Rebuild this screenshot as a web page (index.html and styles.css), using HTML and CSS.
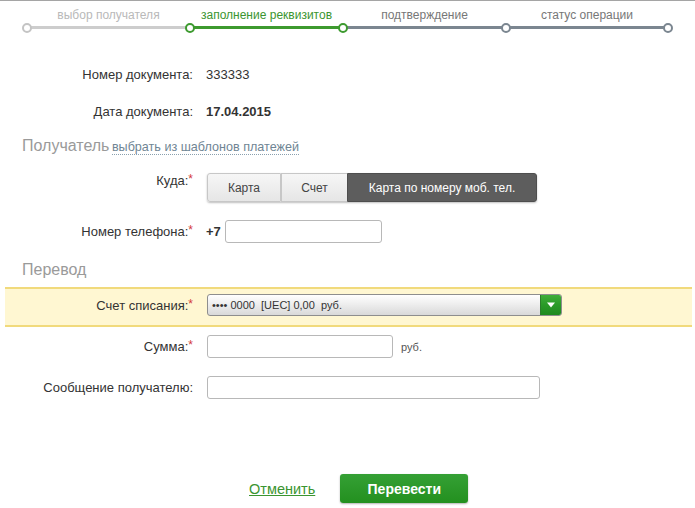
FILE: index.html
```html
<!DOCTYPE html>
<html lang="ru">
<head>
<meta charset="utf-8">
<link rel="stylesheet" href="styles.css">
</head>
<body>
<div class="topbar"></div>
<div class="steps">
  <div class="step done"><div class="step-label">выбор получателя</div><div class="track"></div></div>
  <div class="step active"><div class="step-label">заполнение реквизитов</div><div class="track"></div></div>
  <div class="step next"><div class="step-label">подтверждение</div><div class="track"></div></div>
  <div class="step next last"><div class="step-label">статус операции</div><div class="track"></div></div>
</div>

<div class="form">
  <div class="row info first">
    <div class="label">Номер документа:</div>
    <div class="value">333333</div>
  </div>
  <div class="row info second">
    <div class="label">Дата документа:</div>
    <div class="value bold">17.04.2015</div>
  </div>

  <div class="heading h-recipient">Получатель <a class="tpl-link">выбрать из шаблонов платежей</a></div>

  <div class="row where">
    <div class="label top">Куда:<span class="req">*</span></div>
    <div class="seg">
      <span class="seg-btn seg-card">Карта</span>
      <span class="seg-btn seg-acc">Счет</span>
      <span class="seg-btn seg-on">Карта по номеру моб. тел.</span>
    </div>
  </div>

  <div class="row phone">
    <div class="label">Номер телефона:<span class="req">*</span></div>
    <div class="field"><span class="prefix">+7</span><span class="input in-phone"></span></div>
  </div>

  <div class="heading h-transfer">Перевод</div>

  <div class="band">
    <div class="row">
      <div class="label">Счет списания:<span class="req">*</span></div>
      <div class="select">
        <span class="select-text">•••• 0000&nbsp; [UEC] 0,00&nbsp; руб.</span>
        <span class="select-btn"><svg width="10" height="6" viewBox="0 0 10 6"><path d="M1 0.5 L9 0.5 L5 5.5 Z" fill="#fff"/></svg></span>
      </div>
    </div>
  </div>

  <div class="row sum">
    <div class="label">Сумма:<span class="req">*</span></div>
    <div class="field"><span class="input in-sum"></span><span class="unit">руб.</span></div>
  </div>

  <div class="row msg">
    <div class="label">Сообщение получателю:</div>
    <div class="field"><span class="input in-msg"></span></div>
  </div>

  <div class="actions">
    <a class="cancel">Отменить</a>
    <span class="submit">Перевести</span>
  </div>
</div>
</body>
</html>
```

FILE: styles.css
```css
html, body {
  margin: 0;
  padding: 0;
  background: #fff;
}
body {
  font-family: "Liberation Sans", Arial, sans-serif;
  color: #333;
  width: 695px;
  height: 508px;
  overflow: hidden;
}
.topbar {
  height: 1px;
  background: #a5a5a5;
}
.steps {
  display: grid;
  grid-template-columns: 163px 153px 163px 162px;
  margin-left: 27px;
  padding-top: 7px;
  height: 32px;
}
.step {
  position: relative;
}
.step-label {
  font-size: 12px;
  line-height: 14px;
  height: 14px;
  text-align: center;
  color: #777;
}
.track {
  position: relative;
  margin-top: 4px;
  height: 3px;
}
.track::before {
  content: "";
  position: absolute;
  left: -5px;
  top: -3.5px;
  width: 6px;
  height: 6px;
  border-radius: 50%;
  background: #fff;
  border: 2px solid #7b8690;
  z-index: 2;
}
.step.last .track::after {
  content: "";
  position: absolute;
  right: -5px;
  top: -3.5px;
  width: 6px;
  height: 6px;
  border-radius: 50%;
  background: #fff;
  border: 2px solid #7b8690;
  z-index: 2;
}
.step.done .step-label { color: #b9b9b9; }
.step.done .track { background: #cdcdcd; }
.step.done .track::before { border-color: #c4c4c4; }
.step.active .step-label { color: #3b9530; }
.step.active .track { background: #3d9a2f; }
.step.active .track::before { border-color: #3d9a2f; }
.step.next .track { background: #7b8690; }
.steps .step:nth-child(3) .track::before { border-color: #3d9a2f; }

.form {
  font-size: 13px;
}
.row {
  display: flex;
  align-items: center;
}
.label {
  width: 193px;
  text-align: right;
  flex: none;
  color: #333;
}
.label.top {
  align-self: flex-start;
  padding-top: 0;
}
.req {
  color: #d43a3a;
  font-size: 12px;
  position: relative;
  top: -2px;
}
.value {
  margin-left: 13px;
  color: #333;
}
.value.bold {
  font-weight: bold;
}
.info {
  height: 20px;
}
.info.first { margin-top: 24px; }
.info.second { margin-top: 17px; }

.heading {
  font-size: 16px;
  line-height: 20px;
  height: 20px;
  color: #9a9a9a;
  margin-left: 22px;
}
.h-recipient { margin-top: 15px; }
.h-transfer { margin-top: 17px; }
.tpl-link {
  font-size: 12.6px;
  color: #6f8594;
  border-bottom: 1px dotted #8aa0ae;
  line-height: 14px;
  margin-left: -2px;
}

.where {
  margin-top: 17px;
}
.seg {
  margin-left: 14px;
  display: flex;
  height: 29px;
  border-radius: 3px;
  box-shadow: 0 1px 2px rgba(0,0,0,0.25);
  font-size: 12px;
}
.seg-btn {
  display: flex;
  align-items: center;
  justify-content: center;
  background: linear-gradient(#f6f6f6, #e6e6e6);
  border: 1px solid #c7c7c7;
  color: #444;
}
.seg-card {
  width: 72px;
  border-radius: 3px 0 0 3px;
}
.seg-acc {
  width: 65px;
  border-left: 1px solid #c7c7c7;
  border-right: none;
}
.seg-on {
  width: 188px;
  background: #5d5d5d;
  border-color: #4e4e4e;
  color: #fff;
  border-radius: 0 3px 3px 0;
}

.phone {
  margin-top: 18px;
}
.field {
  display: flex;
  align-items: center;
  margin-left: 13px;
}
.prefix {
  font-weight: bold;
  margin-right: 4px;
}
.input {
  display: block;
  height: 21px;
  border: 1px solid #b8b8b8;
  border-radius: 3px;
  background: #fff;
}
.in-phone { width: 155px; }
.in-sum { width: 184px; margin-left: 1px; }
.in-msg { width: 331px; margin-left: 1px; }
.unit {
  font-size: 11px;
  color: #555;
  margin-left: 8px;
}

.band {
  margin-top: 7px;
  margin-left: 5px;
  margin-right: 3px;
  background: #fff7d2;
  border-top: 2px solid #f1da7c;
  border-bottom: 2px solid #f1da7c;
  padding: 5px 0 9px;
}
.band .label {
  width: 188px;
}
.select {
  margin-left: 14px;
  width: 355px;
  height: 22px;
  box-sizing: border-box;
  border: 1px solid #8e8e8e;
  border-radius: 3px;
  background: linear-gradient(#ffffff 0%, #f2f2f2 35%, #d9d9d9 100%);
  display: flex;
  align-items: center;
  justify-content: space-between;
  overflow: hidden;
}
.select-text {
  font-size: 11px;
  color: #333;
  padding-left: 4px;
}
.select-btn {
  width: 20px;
  height: 100%;
  background: linear-gradient(#3fae3a 0%, #2a9a28 50%, #1f8a1f 100%);
  display: flex;
  align-items: center;
  justify-content: center;
  border-left: 1px solid #2b7d2b;
}

.sum {
  margin-top: 8px;
}
.msg {
  margin-top: 18px;
}

.actions {
  margin-top: 75px;
  display: flex;
  align-items: center;
  padding-left: 249px;
}
.cancel {
  font-size: 14.5px;
  color: #3b9530;
  text-decoration: underline;
}
.submit {
  margin-left: 25px;
  width: 128px;
  height: 29px;
  display: flex;
  align-items: center;
  justify-content: center;
  font-size: 14px;
  font-weight: bold;
  color: #fff;
  border-radius: 3px;
  background: linear-gradient(#35a035, #23901f);
  box-shadow: 0 1px 2px rgba(0,0,0,0.3);
}
```
